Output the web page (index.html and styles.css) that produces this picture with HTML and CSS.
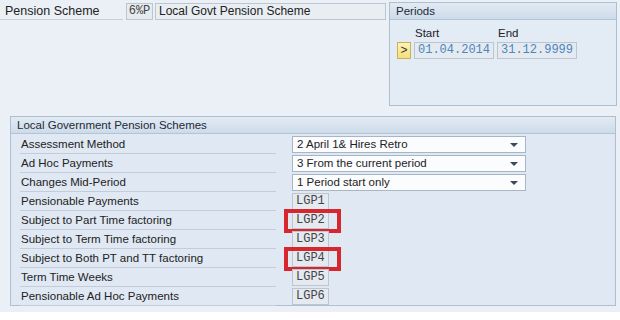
FILE: index.html
```html
<!DOCTYPE html>
<html lang="en">
	<head>
		<meta charset="UTF-8">
		<meta name="viewport" content="width=device-width, initial-scale=1.0">
		<title>Pension Scheme</title>
		<link rel="stylesheet" href="styles.css">
	</head>
    <body>
        <div class="screen">
            <div class="top">
                <div class="scheme">
                    <div class="row">
                        <span class="lbl">Pension Scheme</span>
                        <span class="fld code">6%P</span>
                        <span class="fld txt">Local Govt Pension Scheme</span>
                    </div>
                </div>
                <div class="panel periods">
                    <div class="phead">Periods</div>
                    <div class="pbody">
                        <div class="cols"><span>Start</span><span>End</span></div>
                        <div class="prow">
                            <span class="pick">&gt;</span>
                            <span class="date">01.04.2014</span>
                            <span class="date">31.12.9999</span>
                        </div>
                    </div>
                </div>
            </div>

            <div class="panel lgps">
                <div class="phead">Local Government Pension Schemes</div>
                <div class="lbody">
                    <div class="line"><span class="name">Assessment Method</span><span class="drop">2 April 1&amp; Hires Retro</span></div>
                    <div class="line"><span class="name">Ad Hoc Payments</span><span class="drop">3 From the current period</span></div>
                    <div class="line"><span class="name">Changes Mid-Period</span><span class="drop">1 Period start only</span></div>
                    <div class="line"><span class="name">Pensionable Payments</span><span class="wt">LGP1</span></div>
                    <div class="line"><span class="name">Subject to Part Time factoring</span><span class="wt mark">LGP2</span></div>
                    <div class="line"><span class="name">Subject to Term Time factoring</span><span class="wt">LGP3</span></div>
                    <div class="line"><span class="name">Subject to Both PT and TT factoring</span><span class="wt mark">LGP4</span></div>
                    <div class="line"><span class="name">Term Time Weeks</span><span class="wt">LGP5</span></div>
                    <div class="line"><span class="name">Pensionable Ad Hoc Payments</span><span class="wt">LGP6</span></div>
                </div>
            </div>
        </div>
    </body>
</html>
```

FILE: styles.css
```css
body{padding:0; margin:0; background:#fff; font-family:"Liberation Sans", Arial, sans-serif; font-size:11.5px; color:#222;}
.screen{
    width:620px; height:312px; background:#eaf0f6;
    padding-top:2px; box-sizing:border-box;
}
.top{display:flex; align-items:flex-start;}
.scheme{width:389px; padding-top:1px;}
.row{display:flex; align-items:center; height:17px;}
.lbl{
    width:118px; height:16px; line-height:16px; padding-left:5px;
    border-bottom:1px solid #c6d0db; margin-right:3px; font-size:12.5px;
}
.fld{
    height:15px; line-height:15px; border:1px solid #bcc6d0; background:#e6ebf0;
}
.code{width:25px; text-align:center; font-family:"Liberation Mono", monospace; font-size:12px; color:#444; margin-right:2px;}
.txt{width:226px; padding-left:3px; background:#e9eef3; font-size:12px;}

.panel{border:1px solid #aebfd1; background:#e1eaf4;}
.phead{
    height:16px; line-height:16px; padding-left:6px;
    background:linear-gradient(#e2ebf4, #cddbe9);
    border-bottom:1px solid #b3c4d6; color:#1e2a36;
}
.periods{width:226px; height:102px; background:#e3ebf5;}
.pbody{padding:4px 0 0 7px;}
.cols{display:flex; height:18px; line-height:18px; padding-left:18px;}
.cols span{width:83px;}
.prow{display:flex; align-items:center; gap:3px;}
.pick{
    width:12px; height:15px; line-height:15px; text-align:center;
    background:linear-gradient(#fdf3b8, #f5de7a); border:1px solid #c9b25a;
    color:#333; font-size:12px;
}
.date{
    width:75px; height:15px; line-height:15px; padding-left:3px;
    border:1px solid #bcc6d0; background:#e4eaf0;
    font-family:"Liberation Mono", monospace; font-size:12px; color:#4a86c0;
}

.lgps{margin:10px 0 0 10px; width:604px; height:188px; background:#dfe8f3;}
.lbody{padding:1px 0 0 9px;}
.line{display:flex; align-items:center; height:19px;}
.name{
    width:255px; height:17px; line-height:17px; padding-left:1px; margin-right:16px;
    border-bottom:1px solid #c3ccd7;
}
.drop{
    position:relative; width:228px; height:15px; line-height:15px; padding-left:4px;
    border:1px solid #a7b5c4; background:#fbfcfe; color:#222;
}
.drop::after{
    content:""; position:absolute; right:7px; top:6px;
    border-left:4px solid transparent; border-right:4px solid transparent; border-top:4px solid #3b4a5a;
}
.wt{
    position:relative; width:32px; height:15px; line-height:15px; padding-left:3px;
    border:1px solid #bcc6d0; background:#e4eaf0;
    font-family:"Liberation Mono", monospace; font-size:12px; color:#444;
}
.mark::after{
    content:""; position:absolute; left:-9px; right:-13px; top:-4px; bottom:-5px;
    border:4px solid #d7262d;
}
```
